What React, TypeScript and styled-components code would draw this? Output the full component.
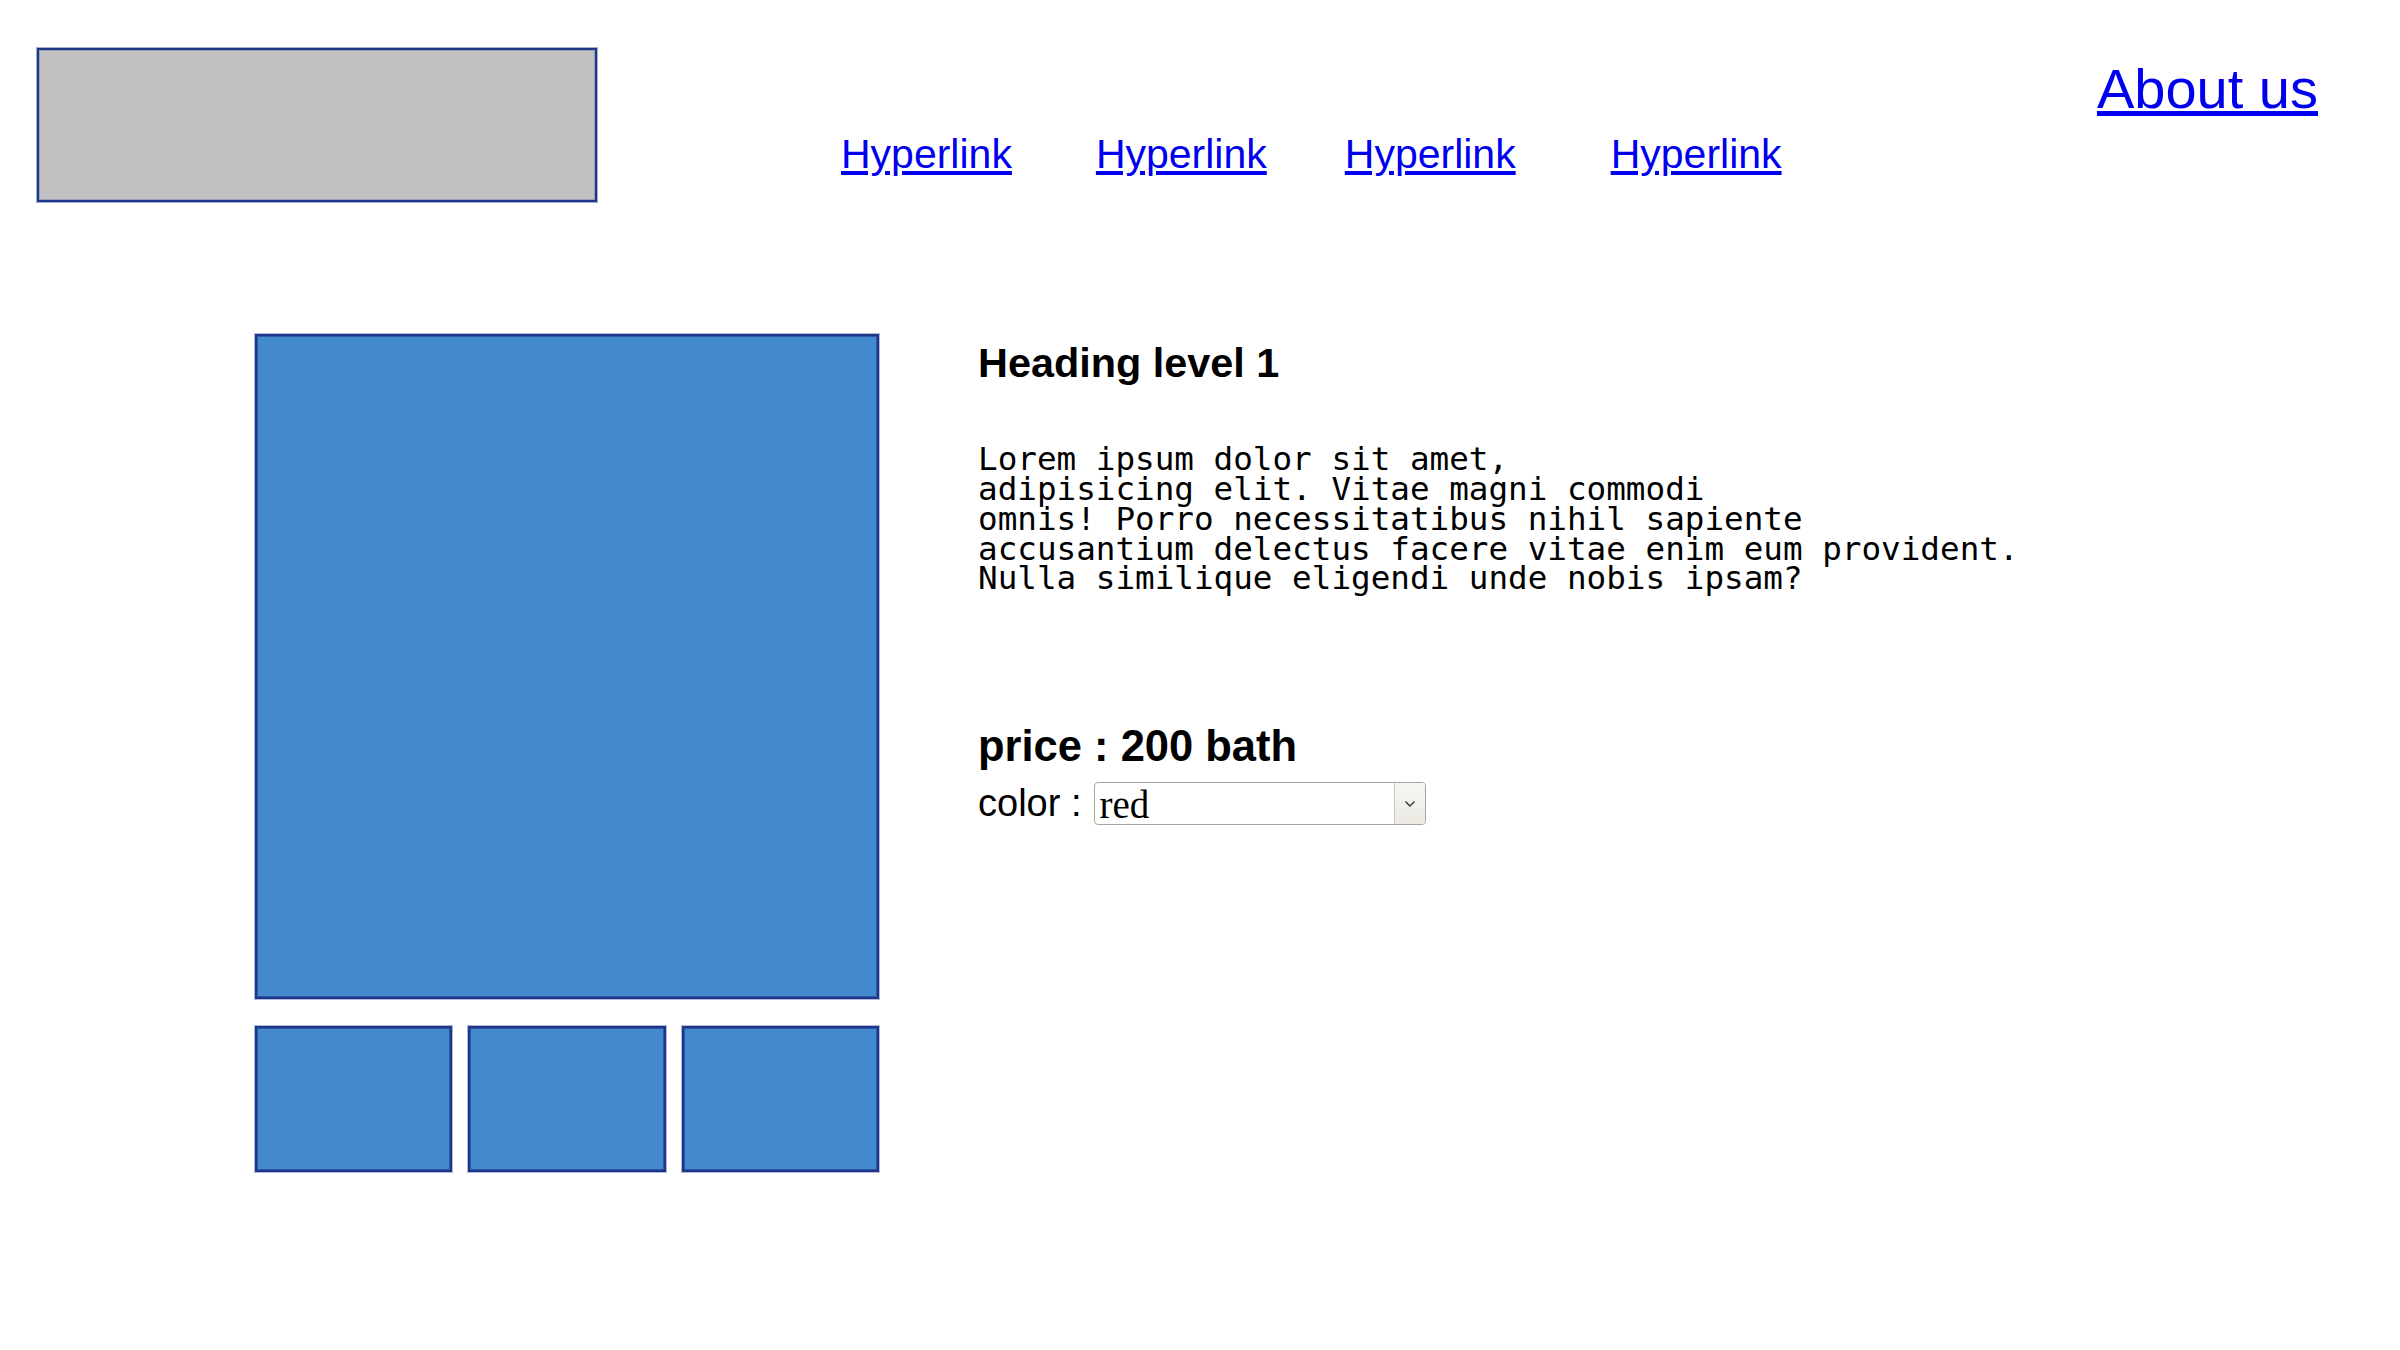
import React from "react";
import styled, { createGlobalStyle } from "styled-components";

const GlobalStyle = createGlobalStyle`
  html, body {
    margin: 0;
    padding: 0;
    background: #ffffff;
  }
  body {
    font-family: "Liberation Sans", Arial, sans-serif;
    color: #000000;
  }
  * { box-sizing: border-box; }
`;

const Page = styled.div`
  width: 2400px;
  min-height: 1350px;
  display: flex;
  flex-direction: column;
`;

const Header = styled.header`
  display: flex;
  align-items: flex-start;
  height: 234px;
`;

const Logo = styled.div`
  margin: 48px 0 0 37px;
  width: 560px;
  height: 154px;
  background: #c0c0c0;
  border: 2px solid #1e3689;
  box-shadow: inset 0 0 0 1px #9aa0b4, 0 0 0 1px rgba(30, 54, 137, 0.4);
  flex: none;
`;

const Nav = styled.nav`
  display: flex;
  margin: 131px 0 0 244px;
`;

const NavLink = styled.a<{ $offset: number }>`
  margin-left: ${(p) => p.$offset}px;
  font-family: "Liberation Sans", Arial, sans-serif;
  font-size: 41px;
  line-height: 47px;
  color: #0000ee;
  text-decoration: underline;
  white-space: nowrap;
`;

const AboutLink = styled.a`
  margin: 57px 82px 0 auto;
  font-family: "Liberation Sans", Arial, sans-serif;
  font-size: 56px;
  line-height: 64px;
  color: #0000ee;
  text-decoration: underline;
  white-space: nowrap;
`;

const Main = styled.main`
  display: flex;
  align-items: flex-start;
  padding-left: 255px;
  margin-top: 100px;
`;

const Gallery = styled.div`
  width: 624px;
  display: flex;
  flex-direction: column;
  gap: 27px;
  flex: none;
`;

const PhotoBox = styled.div<{ $height: number }>`
  height: ${(p) => p.$height}px;
  background: #4389cd;
  border: 2px solid #1e3689;
  box-shadow: inset 0 0 0 1px #2f57a6, 0 0 0 1px rgba(30, 54, 137, 0.35);
`;

const Thumbs = styled.div`
  display: grid;
  grid-template-columns: repeat(3, 1fr);
  gap: 16px;
`;

const Info = styled.section`
  margin-left: 99px;
  padding-top: 6px;
  display: flex;
  flex-direction: column;
`;

const Title = styled.h1`
  margin: 0;
  font-family: "Liberation Sans", Arial, sans-serif;
  font-weight: 700;
  font-size: 41.4px;
  line-height: 47px;
`;

const Description = styled.pre`
  margin: 58px 0 0 0;
  font-family: "DejaVu Sans Mono", "Liberation Mono", monospace;
  font-size: 32.62px;
  line-height: 29.85px;
  color: #000000;
`;

const Price = styled.h2`
  margin: 127px 0 0 0;
  font-family: "Liberation Sans", Arial, sans-serif;
  font-weight: 700;
  font-size: 43.5px;
  line-height: 50px;
`;

const ColorRow = styled.div`
  margin-top: 11px;
  display: flex;
  align-items: center;
  gap: 13px;
  height: 43px;
`;

const ColorLabel = styled.label`
  font-family: "Liberation Sans", Arial, sans-serif;
  font-size: 38px;
  line-height: 43px;
`;

const SelectWrap = styled.div`
  position: relative;
  width: 332px;
  height: 43px;
`;

const NativeSelect = styled.select`
  appearance: none;
  -webkit-appearance: none;
  width: 100%;
  height: 100%;
  margin: 0;
  padding: 0 36px 0 4px;
  border: 1px solid #a9a59a;
  border-radius: 4px;
  background: #ffffff;
  font-family: "Liberation Serif", "Times New Roman", serif;
  font-size: 39px;
  color: #000000;
  outline: none;
`;

const SelectArrow = styled.span`
  position: absolute;
  top: 1px;
  right: 1px;
  bottom: 1px;
  width: 31px;
  border-left: 1px solid #cbc7bc;
  border-radius: 0 3px 3px 0;
  background: linear-gradient(to bottom, #f7f6f2, #ebe9e2);
  display: flex;
  align-items: center;
  justify-content: center;
  pointer-events: none;
`;

const links = [0, 84, 78, 95];

export default function App() {
  return (
    <Page>
      <GlobalStyle />
      <Header>
        <Logo />
        <Nav>
          {links.map((offset, i) => (
            <NavLink key={i} href="#" $offset={offset}>
              Hyperlink
            </NavLink>
          ))}
        </Nav>
        <AboutLink href="#">About us</AboutLink>
      </Header>
      <Main>
        <Gallery>
          <PhotoBox $height={665} />
          <Thumbs>
            <PhotoBox $height={146} />
            <PhotoBox $height={146} />
            <PhotoBox $height={146} />
          </Thumbs>
        </Gallery>
        <Info>
          <Title>Heading level 1</Title>
          <Description>{`Lorem ipsum dolor sit amet,
adipisicing elit. Vitae magni commodi
omnis! Porro necessitatibus nihil sapiente
accusantium delectus facere vitae enim eum provident.
Nulla similique eligendi unde nobis ipsam?`}</Description>
          <Price>price : 200 bath</Price>
          <ColorRow>
            <ColorLabel htmlFor="color-select">color :</ColorLabel>
            <SelectWrap>
              <NativeSelect id="color-select" defaultValue="red">
                <option value="red">red</option>
                <option value="green">green</option>
                <option value="blue">blue</option>
              </NativeSelect>
              <SelectArrow>
                <svg width="12" height="8" viewBox="0 0 12 8" fill="none">
                  <path d="M1.5 1.5 L6 6 L10.5 1.5" stroke="#333" strokeWidth="1.4" />
                </svg>
              </SelectArrow>
            </SelectWrap>
          </ColorRow>
        </Info>
      </Main>
    </Page>
  );
}
